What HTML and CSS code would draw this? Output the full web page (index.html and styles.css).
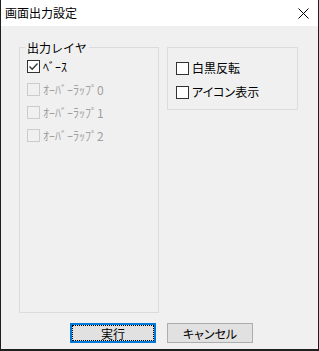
FILE: index.html
```html
<!DOCTYPE html>
<html lang="ja">
<head>
  <meta charset="UTF-8" />
  <meta name="viewport" content="width=device-width, initial-scale=1.0" />
  <title>画面出力設定</title>
  <link rel="stylesheet" href="styles.css">
</head>
<body>
  <div class="window">
    <div class="titlebar">
      <span class="title">画面出力設定</span>
      <svg class="close" width="11" height="11" viewBox="0 0 11 11">
        <path d="M0.5 0.5 L10.5 10.5 M10.5 0.5 L0.5 10.5" stroke="#000" stroke-width="1" fill="none" />
      </svg>
    </div>

    <div class="content">
      <div class="groups">
        <fieldset class="group group-layer">
          <legend>出力レイヤ</legend>
          <label class="check">
            <span class="box">
              <svg width="11" height="11" viewBox="0 0 11 11">
                <path d="M1.5 5.5 L4.2 8.3 L9.5 2.5" stroke="#333" stroke-width="1.3" fill="none" />
              </svg>
            </span>
            ﾍﾞｰｽ
          </label>
          <label class="check disabled"><span class="box"></span>ｵｰﾊﾞｰﾗｯﾌﾟ0</label>
          <label class="check disabled"><span class="box"></span>ｵｰﾊﾞｰﾗｯﾌﾟ1</label>
          <label class="check disabled"><span class="box"></span>ｵｰﾊﾞｰﾗｯﾌﾟ2</label>
        </fieldset>

        <div class="group group-option">
          <label class="check"><span class="box"></span>白黒反転</label>
          <label class="check"><span class="box"></span>アイコン表示</label>
        </div>
      </div>

      <div class="actions">
        <button class="btn btn-default"><span class="focus">実行</span></button>
        <button class="btn">キャンセル</button>
      </div>
    </div>
  </div>
</body>
</html>
```

FILE: styles.css
```css
* {
  box-sizing: border-box;
}

body {
  margin: 0;
  font-family: "Noto Sans CJK JP", "Noto Sans", sans-serif;
  font-size: 12px;
  color: #000;
  background: #f0f0f0;
}

.window {
  width: 319px;
  height: 351px;
  border: 1px solid #1f1f1f;
  border-top: none;
  border-bottom-width: 2px;
  background: #f0f0f0;
  display: flex;
  flex-direction: column;
}

.titlebar {
  height: 26px;
  background: #fff;
  display: flex;
  align-items: center;
  justify-content: space-between;
  padding: 0 9px 0 4px;
}

.title {
  line-height: 14px;
}

.close {
  display: block;
}

.content {
  padding: 15px 0 0 18px;
}

.groups {
  display: flex;
  align-items: flex-start;
  gap: 8px;
}

.group {
  margin: 0;
  border: 1px solid #dcdcdc;
}

.group-layer {
  width: 140px;
  height: 272px;
  padding: 1px 0 0 7px;
}

.group-layer legend {
  margin-left: -2px;
  padding: 0 2px;
  line-height: 13px;
  height: 13px;
}

.group-option {
  width: 131px;
  height: 63px;
  margin-top: 6px;
  padding: 8px 0 0 8px;
  font-feature-settings: "palt";
}

.check {
  display: flex;
  align-items: center;
  height: 23px;
  line-height: 14px;
}

.group-option .check {
  height: 24px;
}

.box {
  width: 13px;
  height: 13px;
  border: 1px solid #333;
  background: #fff;
  margin-right: 3px;
  display: flex;
  align-items: center;
  justify-content: center;
}

.check.disabled {
  color: #a0a0a0;
}

.check.disabled .box {
  border-color: #cccccc;
  background: #f0f0f0;
}

.actions {
  display: flex;
  gap: 11px;
  margin-top: 10px;
  padding-left: 51px;
}

.btn {
  width: 86px;
  height: 20px;
  padding: 0;
  font-family: inherit;
  font-size: 12px;
  font-feature-settings: "palt";
  color: #000;
  background: #e1e1e1;
  border: 1px solid #adadad;
  border-radius: 0;
}

.btn-default {
  border: 2px solid #0078d7;
}

.focus {
  display: flex;
  align-items: center;
  justify-content: center;
  height: 100%;
  border: 1px dotted #000;
}
```
